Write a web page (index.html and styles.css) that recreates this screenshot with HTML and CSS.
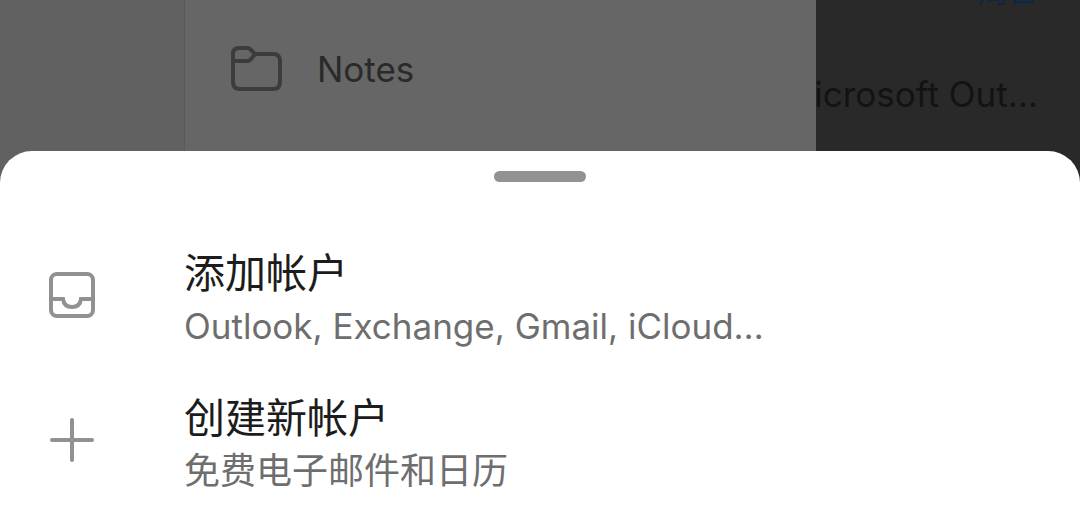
FILE: index.html
```html
<!DOCTYPE html>
<html lang="zh-CN">
<head>
    <meta charset="UTF-8">
    <meta name="viewport" content="width=device-width, initial-scale=1.0">
    <title>添加帐户</title>
    <link rel="stylesheet" href="styles.css">
</head>
<body>
    <div class="backdrop">
        <div class="rail"></div>
        <nav class="drawer">
            <a class="folder" href="#notes">
                <svg class="folder-icon" viewBox="0 0 54 48" fill="none" stroke="currentColor" stroke-width="4" stroke-linejoin="round">
                    <path d="M3 16V9q0-6 6-6h8q3 0 5 3l3 3h18q7 0 7 7v21q0 7-7 7H10q-7 0-7-7V16h14q3 0 5-3l3-4"/>
                </svg>
                <span>Notes</span>
            </a>
        </nav>
        <div class="mail">
            <div class="mail-date">周日</div>
            <div class="mail-subject">Microsoft Out…</div>
        </div>
    </div>

    <main class="sheet">
        <div class="handle"></div>
        <button class="option">
            <svg class="option-icon" viewBox="0 0 48 48" fill="none" stroke="currentColor" stroke-width="4">
                <rect x="3" y="3" width="42" height="42" rx="6"/>
                <path d="M3 28h12q1 8 9 8t9-8h12"/>
            </svg>
            <span class="option-text">
                <span class="option-title">添加帐户</span>
                <span class="option-desc" lang="en">Outlook, Exchange, Gmail, iCloud…</span>
            </span>
        </button>
        <button class="option">
            <svg class="option-icon" viewBox="0 0 48 48" fill="none" stroke="currentColor" stroke-width="4" stroke-linecap="round">
                <path d="M24 4v40M4 24h40"/>
            </svg>
            <span class="option-text">
                <span class="option-title">创建新帐户</span>
                <span class="option-desc">免费电子邮件和日历</span>
            </span>
        </button>
    </main>
</body>
</html>
```
FILE: styles.css
```css
* {
    box-sizing: border-box;
    margin: 0;
    padding: 0;
}

body {
    min-height: 100vh;
    display: flex;
    flex-direction: column;
    background: white;
    font-family: Inter, 'Noto Sans CJK SC', sans-serif;
    overflow: hidden;
}

.backdrop {
    display: flex;
    height: 184px;
    background: #292929;
    overflow: hidden;
}

.rail {
    width: 185px;
    background: #616161;
    border-right: 1px solid #595959;
}

.drawer {
    width: 631px;
    padding: 45px;
    background: #666;
}

.folder {
    display: flex;
    align-items: center;
    gap: 33px;
    color: #2a2a2a;
    font-size: 35px;
    line-height: 48px;
    text-decoration: none;
}

.folder-icon {
    width: 54px;
    height: 48px;
    color: #3c3c3c;
}

.mail {
    flex: 1;
    display: flex;
    flex-direction: column;
    align-items: flex-end;
    gap: 55px;
    padding-right: 42px;
    margin-top: -33px;
    overflow: hidden;
    white-space: nowrap;
}

.mail-date {
    color: #0c2740;
    font-size: 30px;
    line-height: 48px;
}

.mail-subject {
    color: #131313;
    font-size: 35px;
    line-height: 48px;
}

.sheet {
    flex: 1;
    position: relative;
    margin-top: -33px;
    padding: 20px 0;
    border-radius: 32px 32px 0 0;
    background: white;
}

.handle {
    width: 92px;
    height: 11px;
    margin: 0 auto 57px;
    border-radius: 6px;
    background: #929292;
}

.option {
    display: flex;
    align-items: center;
    gap: 88px;
    width: 100%;
    height: 112px;
    margin-bottom: 33px;
    padding: 0 48px;
    border: none;
    background: none;
    font-family: inherit;
    text-align: left;
    cursor: pointer;
}

.option-icon {
    flex: none;
    width: 48px;
    height: 48px;
    color: #919191;
}

.option-title,
.option-desc {
    display: block;
    white-space: nowrap;
}

.option-title {
    margin-top: 6px;
    color: #1c1c1c;
    font-size: 41px;
    line-height: 56px;
}

.option-desc {
    color: #6e6e6e;
    font-size: 36px;
    line-height: 50px;
}

.option-desc:lang(en) {
    font-size: 35px;
}
```
